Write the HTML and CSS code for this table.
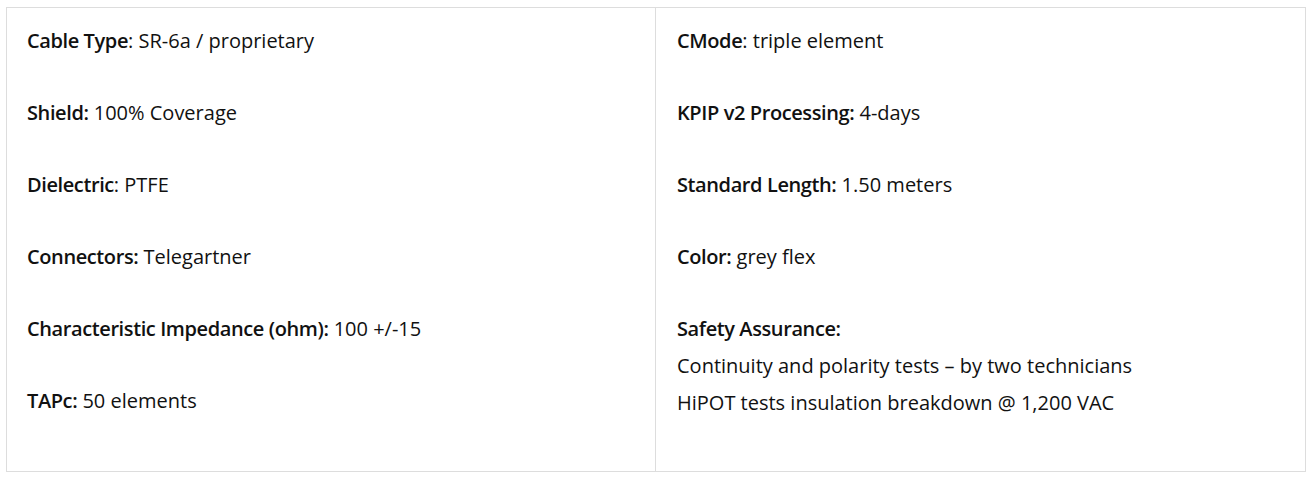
FILE: index.html
```html
<!DOCTYPE html>
<html>
<head>
<meta charset="utf-8">
<link rel="stylesheet" href="styles.css">
</head>
<body>
<div class="specs">
  <div class="col">
    <p><b>Cable Type</b>: SR-6a / proprietary</p>
    <p><b>Shield:</b> 100% Coverage</p>
    <p><b>Dielectric</b>: PTFE</p>
    <p><b>Connectors:</b> Telegartner</p>
    <p><b>Characteristic Impedance (ohm):</b> 100 +/-15</p>
    <p><b>TAPc:</b> 50 elements</p>
  </div>
  <div class="col">
    <p><b>CMode</b>: triple element</p>
    <p><b>KPIP v2 Processing:</b> 4-days</p>
    <p><b>Standard Length:</b> 1.50 meters</p>
    <p><b>Color:</b> grey flex</p>
    <p><b>Safety Assurance:</b><br>Continuity and polarity tests – by two technicians<br>HiPOT tests insulation breakdown @ 1,200 VAC</p>
  </div>
</div>
</body>
</html>
```
FILE: styles.css
```css
html, body { margin: 0; padding: 0; background: #fff; }
body { padding: 7px 7px 0 6px; font-family: "Open Sans", sans-serif; color: #111; }
.specs {
  display: grid;
  grid-template-columns: 648px 1fr;
  width: 1300px;
  height: 465px;
  box-sizing: border-box;
  border: 1px solid #ddd;
}
.col { padding: 14px 20px; }
.col + .col { border-left: 1px solid #ddd; padding-left: 21px; }
p { margin: 0 0 35px; font-size: 20px; line-height: 37px; }
b { font-weight: 600; letter-spacing: -0.4px; }
```
